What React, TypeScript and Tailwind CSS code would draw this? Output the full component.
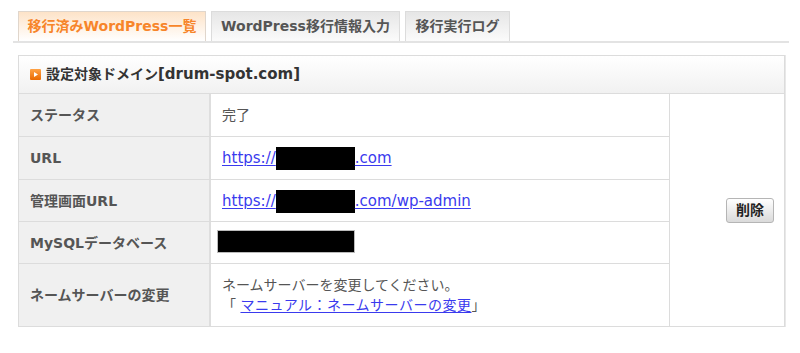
export default function App() {
  const Redact = ({ w }: { w: number }) => (
    <span
      className="inline-block h-[23px] bg-black align-top -mt-[1px] -mb-[2px]"
      style={{ width: w }}
    />
  );
  const rows: { label: string; value: React.ReactNode; h: string }[] = [
    { label: "ステータス", h: "h-[42px]", value: <span>完了</span> },
    {
      label: "URL",
      h: "h-[42px]",
      value: (
        <a className="text-[15px] text-[#3a3aee] underline underline-offset-2">
          https://<Redact w={79} />.com
        </a>
      ),
    },
    {
      label: "管理画面URL",
      h: "h-[41px]",
      value: (
        <a className="text-[15px] text-[#3a3aee] underline underline-offset-2">
          https://<Redact w={79} />.com/wp-admin
        </a>
      ),
    },
    {
      label: "MySQLデータベース",
      h: "h-[41px]",
      value: (
        <span className="-ml-[4px] mt-[-2px] inline-block h-[21px] w-[136px] bg-black ring-1 ring-[#bbb]" />
      ),
    },
    {
      label: "ネームサーバーの変更",
      h: "h-[62px]",
      value: (
        <div>
          <div>ネームサーバーを変更してください。</div>
          <div>
            「 <a className="tracking-[0.5px] text-[#3a3aee] underline underline-offset-2">マニュアル：ネームサーバーの変更</a>」
          </div>
        </div>
      ),
    },
  ];

  return (
    <div className="h-[353px] w-[800px] overflow-hidden bg-white pt-[11px] font-['DejaVu_Sans','Noto_Sans_CJK_JP',sans-serif] text-[14px] text-[#555]">
      <div className="ml-[13px] flex w-[776px] gap-[5px] border-b-2 border-[#e3e3e3] pl-[5px]">
        <div className="flex h-[30px] w-[188px] items-center justify-center border border-b-0 border-[#e0d6cc] bg-gradient-to-b from-[#fde3c8] to-white font-bold text-[#f7852a]">
          移行済みWordPress一覧
        </div>
        <div className="flex h-[30px] w-[189px] items-center justify-center border border-b-0 border-[#dcdcdc] bg-gradient-to-b from-[#e6e6e6] to-[#fbfbfb] font-bold text-[#555]">
          WordPress移行情報入力
        </div>
        <div className="flex h-[30px] w-[105px] items-center justify-center border border-b-0 border-[#dcdcdc] bg-gradient-to-b from-[#e6e6e6] to-[#fbfbfb] font-bold text-[#555]">
          移行実行ログ
        </div>
      </div>

      <div className="ml-[18px] mt-[12px] w-[767px] border border-[#dcdcdc] shadow-[1px_0_0_#e8e8e8]">
        <div className="flex h-[38px] items-center gap-[5px] border-b border-[#dcdcdc] bg-gradient-to-b from-white to-[#f1f1f1] pl-[11px] font-bold text-[#333]">
          <svg width="11" height="11" viewBox="0 0 11 11">
            <defs>
              <linearGradient id="og" x1="0" y1="0" x2="0" y2="1">
                <stop offset="0" stopColor="#ffa346" />
                <stop offset="1" stopColor="#ea6a00" />
              </linearGradient>
            </defs>
            <rect x="0" y="0" width="11" height="11" rx="1" fill="url(#og)" />
            <polygon points="4,3 8,5.5 4,8" fill="#fff" />
          </svg>
          <span>
            設定対象ドメイン<span className="text-[15px]">[drum-spot.com]</span>
          </span>
        </div>
        <div className="flex">
          <div className="w-[650px]">
            {rows.map((r, i) => (
              <div key={i} className={`flex ${r.h} box-content ${i > 0 ? "border-t border-[#dcdcdc]" : ""}`}>
                <div className="flex w-[192px] shrink-0 items-center border-r-2 border-[#dedede] bg-[#f0f0f0] pl-[11px] font-bold leading-[20px] text-[#555]">
                  {r.label}
                </div>
                <div className="flex flex-1 items-center pl-[11px] leading-[20px]">
                  {r.value}
                </div>
              </div>
            ))}
          </div>
          <div className="flex flex-1 items-center justify-end border-l border-[#dcdcdc] pr-[10px]">
            <button className="h-[25px] w-[48px] rounded-[3px] border border-[#b5b5b5] bg-gradient-to-b from-white to-[#dadada] text-[14px] font-bold text-[#222]">
              削除
            </button>
          </div>
        </div>
      </div>
    </div>
  );
}
